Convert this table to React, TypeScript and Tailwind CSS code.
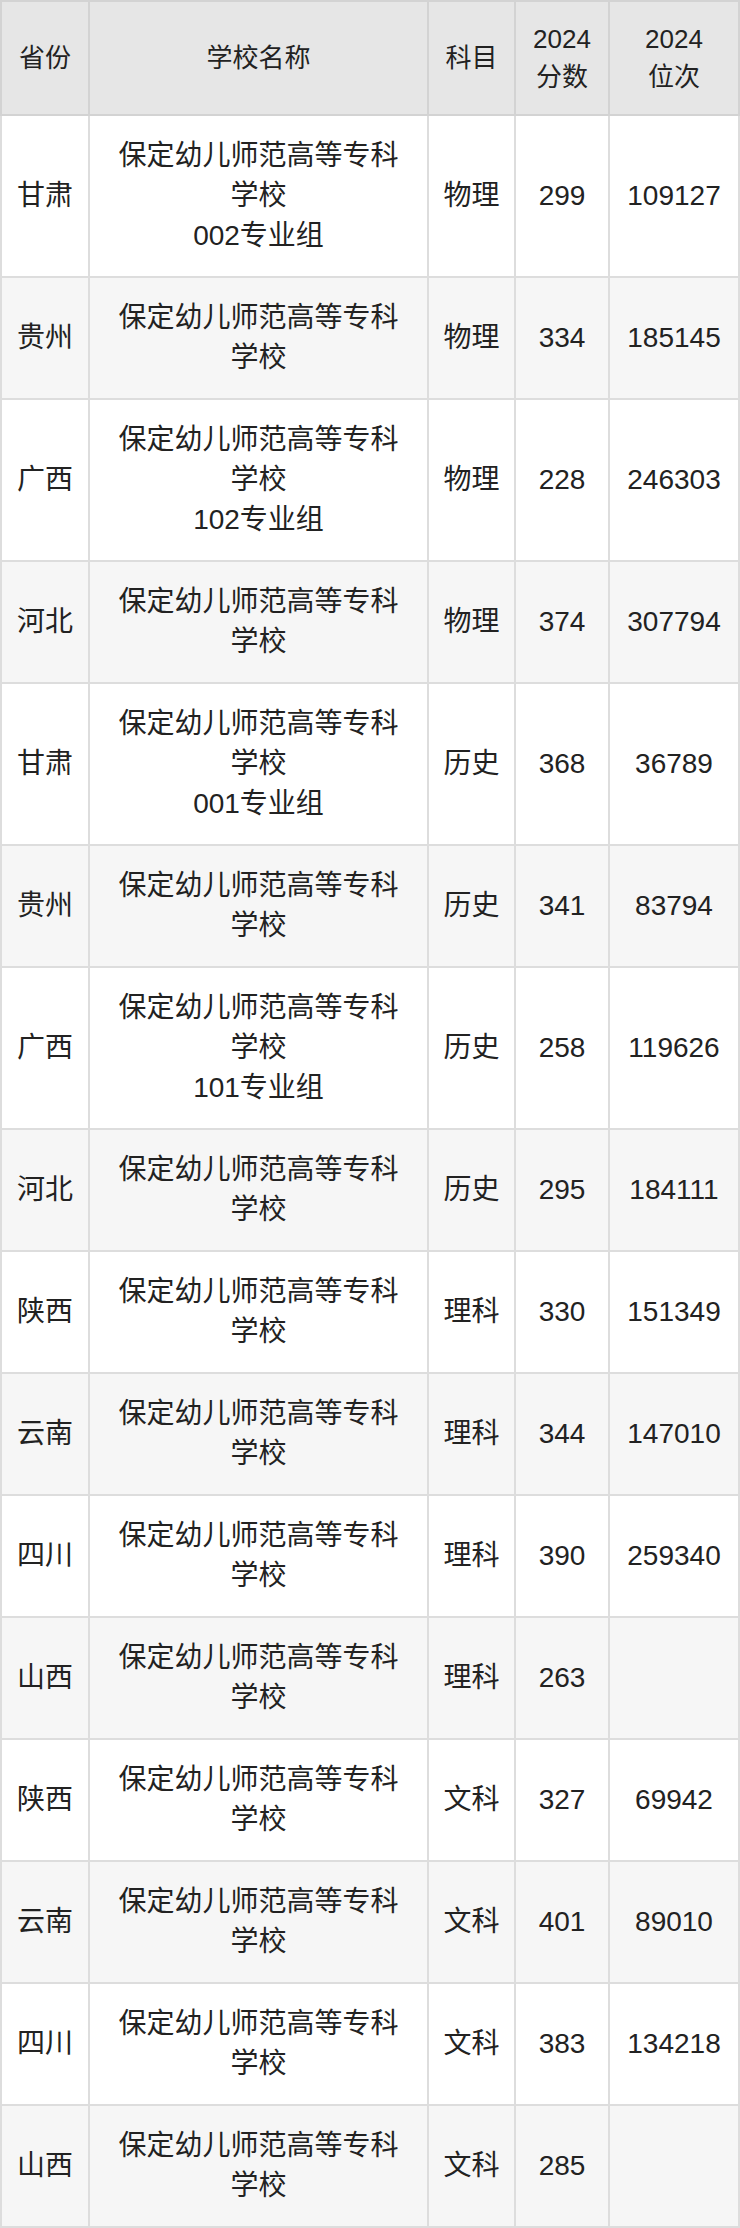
const school = '保定幼儿师范高等专科学校'

type Row = { province: string; group?: string; subject: string; score: string; rank: string }

const rows: Row[] = [
  { province: '甘肃', group: '002专业组', subject: '物理', score: '299', rank: '109127' },
  { province: '贵州', subject: '物理', score: '334', rank: '185145' },
  { province: '广西', group: '102专业组', subject: '物理', score: '228', rank: '246303' },
  { province: '河北', subject: '物理', score: '374', rank: '307794' },
  { province: '甘肃', group: '001专业组', subject: '历史', score: '368', rank: '36789' },
  { province: '贵州', subject: '历史', score: '341', rank: '83794' },
  { province: '广西', group: '101专业组', subject: '历史', score: '258', rank: '119626' },
  { province: '河北', subject: '历史', score: '295', rank: '184111' },
  { province: '陕西', subject: '理科', score: '330', rank: '151349' },
  { province: '云南', subject: '理科', score: '344', rank: '147010' },
  { province: '四川', subject: '理科', score: '390', rank: '259340' },
  { province: '山西', subject: '理科', score: '263', rank: '' },
  { province: '陕西', subject: '文科', score: '327', rank: '69942' },
  { province: '云南', subject: '文科', score: '401', rank: '89010' },
  { province: '四川', subject: '文科', score: '383', rank: '134218' },
  { province: '山西', subject: '文科', score: '285', rank: '' },
]

const th = 'border-2 border-[#d3d3d3] py-[18px] px-2 text-[26px] leading-[38px] font-normal text-[#222]'
const td = 'border-2 border-[#dddddd] py-5 px-2 text-[28px] leading-[40px] text-[#222]'

export default function App() {
  return (
    <div className="w-[740px] bg-white" style={{ fontFamily: '"Liberation Sans", "Noto Sans CJK SC", sans-serif' }}>
      <table className="w-[740px] table-fixed border-collapse text-center">
        <colgroup>
          <col className="w-[88px]" />
          <col className="w-[339px]" />
          <col className="w-[87px]" />
          <col className="w-[94px]" />
          <col className="w-[130px]" />
        </colgroup>
        <thead>
          <tr className="bg-[#e6e6e6]">
            <th className={th}>省份</th>
            <th className={th}>学校名称</th>
            <th className={th}>科目</th>
            <th className={th}>
              2024
              <br />
              分数
            </th>
            <th className={th}>
              2024
              <br />
              位次
            </th>
          </tr>
        </thead>
        <tbody>
          {rows.map((r, i) => (
            <tr key={i} className={i % 2 === 1 ? 'bg-[#f6f6f6]' : 'bg-white'}>
              <td className={td}>{r.province}</td>
              <td className={`${td} px-5`}>
                {school}
                {r.group && (
                  <>
                    <br />
                    {r.group}
                  </>
                )}
              </td>
              <td className={td}>{r.subject}</td>
              <td className={td}>{r.score}</td>
              <td className={td}>{r.rank}</td>
            </tr>
          ))}
        </tbody>
      </table>
    </div>
  )
}
